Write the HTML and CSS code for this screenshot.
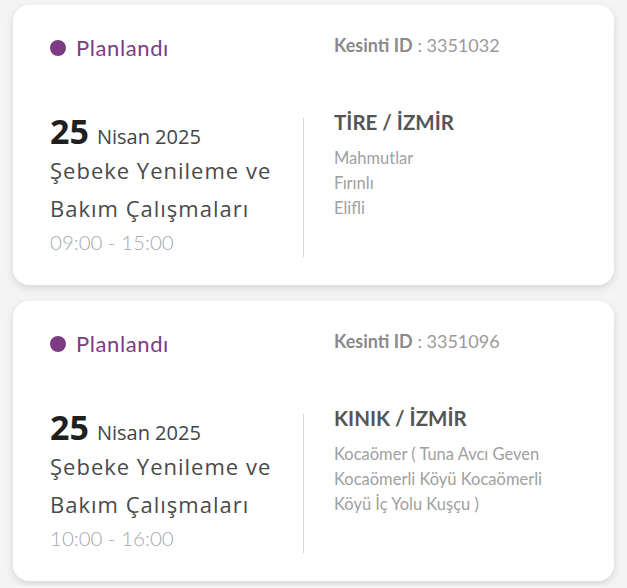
FILE: index.html
```html
<!DOCTYPE html>
<html lang="tr">
<head>
<meta charset="utf-8">
<link rel="stylesheet" href="styles.css">
</head>
<body>
<div class="list">
  <div class="card">
    <div class="head">
      <div class="status"><span class="dot"></span><span class="status-text">Planlandı</span></div>
      <div class="kid"><b>Kesinti ID</b> : 3351032</div>
    </div>
    <div class="body">
      <div class="left">
        <div class="date"><span class="day">25</span><span class="month">Nisan 2025</span></div>
        <div class="title">Şebeke Yenileme ve Bakım Çalışmaları</div>
        <div class="time">09:00 - 15:00</div>
      </div>
      <div class="divider"></div>
      <div class="right">
        <div class="place">TİRE / İZMİR</div>
        <div class="areas">Mahmutlar<br>Fırınlı<br>Elifli</div>
      </div>
    </div>
  </div>
  <div class="card">
    <div class="head">
      <div class="status"><span class="dot"></span><span class="status-text">Planlandı</span></div>
      <div class="kid"><b>Kesinti ID</b> : 3351096</div>
    </div>
    <div class="body">
      <div class="left">
        <div class="date"><span class="day">25</span><span class="month">Nisan 2025</span></div>
        <div class="title">Şebeke Yenileme ve Bakım Çalışmaları</div>
        <div class="time">10:00 - 16:00</div>
      </div>
      <div class="divider"></div>
      <div class="right">
        <div class="place">KINIK / İZMİR</div>
        <div class="areas">Kocaömer ( Tuna Avcı Geven Kocaömerli Köyü Kocaömerli Köyü İç Yolu Kuşçu )</div>
      </div>
    </div>
  </div>
</div>
</body>
</html>
```

FILE: styles.css
```css
* { box-sizing: border-box; }
html, body { margin: 0; padding: 0; }
body {
  background: #f4f4f4;
  font-family: "Open Sans", "Noto Sans", sans-serif;
  overflow: hidden;
}
.list {
  display: flex;
  flex-direction: column;
  gap: 16px;
  padding: 5px 13px;
}
.card {
  background: #fff;
  border-radius: 16px;
  box-shadow: 0 3px 8px rgba(0,0,0,0.12);
  height: 280px;
  padding: 31px 0 0 37px;
}
.head {
  display: grid;
  grid-template-columns: 284px 1fr;
  height: 24px;
  margin-bottom: 50px;
}
.status {
  display: flex;
  align-items: center;
  gap: 10px;
  line-height: 24px;
}
.dot {
  width: 16px;
  height: 16px;
  border-radius: 50%;
  background: #7c3b82;
  flex: none;
}
.status-text {
  font-family: "Lato", sans-serif;
  font-size: 22px;
  letter-spacing: 0.6px;
  color: #7c3b82;
}
.kid {
  font-family: "Lato", sans-serif;
  font-size: 18px;
  line-height: 24px;
  color: #9a9a9a;
  margin-top: -3px;
}
.kid b { color: #8a8a8a; font-weight: 700; }
.body {
  display: grid;
  grid-template-columns: 253px 1px 1fr;
}
.left { padding-top: 7px; }
.date {
  line-height: 28px;
  display: flex;
  align-items: baseline;
  gap: 8px;
}
.day {
  font-size: 34px;
  font-weight: 700;
  color: #1f1f1f;
}
.month {
  font-size: 20px;
  color: #444;
}
.title {
  font-size: 22px;
  letter-spacing: 1px;
  line-height: 38px;
  color: #4a4a4a;
}
.time {
  font-family: "Lato", sans-serif;
  font-weight: 300;
  font-size: 20.5px;
  line-height: 26px;
  margin-top: 2px;
  color: #a8a8a8;
}
.divider {
  background: #d6d6d6;
  margin-top: 8px;
  height: 139px;
}
.right { padding-left: 30px; }
.place {
  font-family: "Lato", sans-serif;
  font-weight: 700;
  font-size: 20.5px;
  line-height: 24px;
  color: #555;
}
.areas {
  font-family: "Lato", sans-serif;
  font-size: 16.5px;
  line-height: 25px;
  color: #a0a0a0;
  margin-top: 12px;
  max-width: 235px;
}
```
